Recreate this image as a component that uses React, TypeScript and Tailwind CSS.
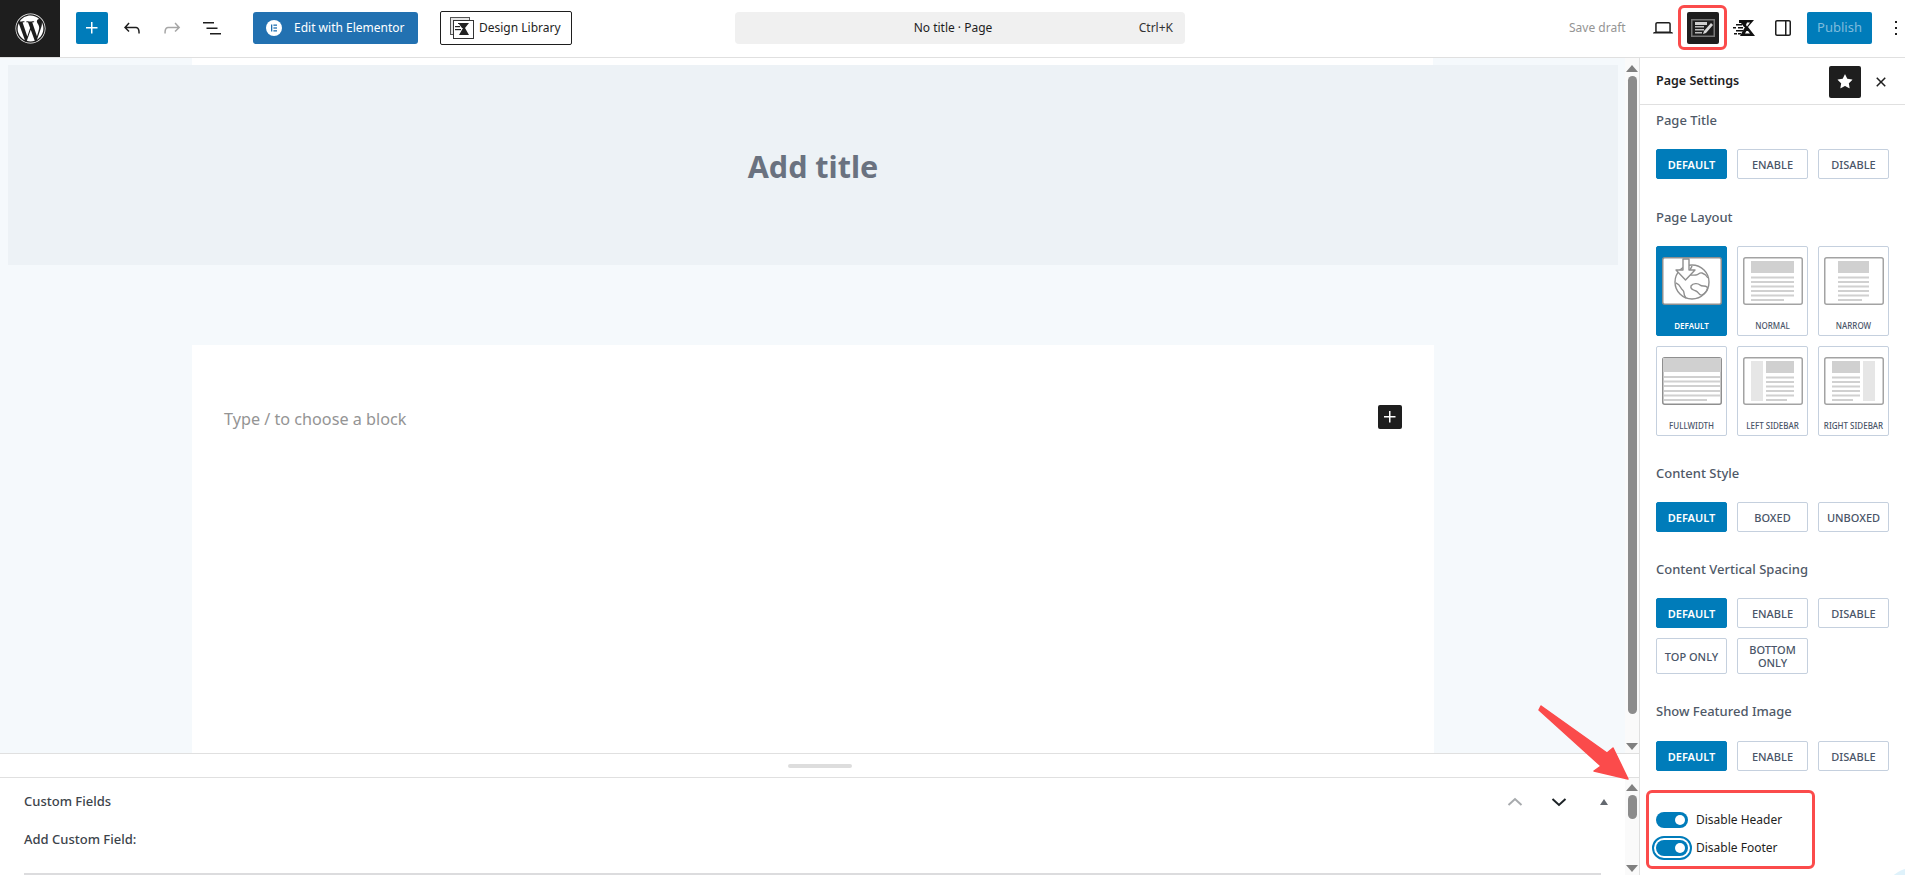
import React from "react";
import { FaWordpress } from "react-icons/fa";

const font = { fontFamily: '"Noto Sans", "Open Sans", sans-serif' };

function WpIcon({ d, className = "" }: { d: string; className?: string }) {
  return (
    <svg viewBox="0 0 24 24" width="24" height="24" fill="currentColor" className={"shrink-0 " + className}>
      <path d={d} />
    </svg>
  );
}

function OptBtn({ label, active, tall }: { label: string; active?: boolean; tall?: boolean }) {
  return (
    <div
      className={
        "flex items-center justify-center text-center rounded-[2px] border text-[11px] leading-[13px] font-medium " +
        (tall ? "h-[36px] " : "h-[30px] ") +
        (active ? "bg-[#007cba] border-[#007cba] text-white font-semibold" : "bg-white border-[#c5d0de] text-[#4a5568]")
      }
    >
      {label}
    </div>
  );
}

function Heading({ children, tight }: { children: React.ReactNode; tight?: boolean }) {
  return (
    <div className={"h-[20px] leading-[20px] text-[13px] font-medium text-[#4f5967] " + (tight ? "mb-[20px]" : "mb-[19px]")}>
      {children}
    </div>
  );
}

function Frame({ children, dark }: { children?: React.ReactNode; dark?: boolean }) {
  return (
    <svg width="60" height="48" viewBox="0 0 60 48" className="block shrink-0">
      <rect x="0.75" y="0.75" width="58.5" height="46.5" rx="2" fill="#fff" stroke={dark ? "#8f8f8f" : "#a3a3a3"} strokeWidth="1.5" />
      {children}
    </svg>
  );
}

function Lines({ x, w, last, ys }: { x: number; w: number; last: number; ys: number[] }) {
  return (
    <>
      {ys.map((y, i) => (
        <rect key={y} x={x} y={y} width={i === ys.length - 1 ? last : w} height="2" fill="#d0d0d0" />
      ))}
    </>
  );
}

const lineYs = [19.5, 24, 28.5, 33, 37.5, 42];

const layoutCards: { label: string; art: React.ReactNode; active?: boolean }[] = [
  {
    label: "DEFAULT",
    active: true,
    art: (
      <Frame dark>
        <g fill="none" stroke="#8f8f8f" strokeWidth="1.4" strokeLinejoin="round">
          <circle cx="30" cy="25" r="17" />
          <path d="M14 26c3 1 4 3 5 5s3 2 3 5 1 4 2 5" />
          <path d="M30 9c-1 3-3 4-3 7s4 2 7 2 3-3 6-2 5 3 6 5" />
          <path d="M29 29c2-3 7-3 9-1s5 0 7 2-2 7-5 8-3-3-6-4-6-2-5-5z" />
          <path d="M21 2h6v11h6l-9.5 10L14 13h7z" fill="#fff" />
        </g>
      </Frame>
    ),
  },
  {
    label: "NORMAL",
    art: (
      <Frame>
        <rect x="8" y="4" width="43" height="12" fill="#d0d0d0" />
        <Lines x={8} w={43} last={33} ys={lineYs} />
      </Frame>
    ),
  },
  {
    label: "NARROW",
    art: (
      <Frame>
        <rect x="14" y="4" width="31" height="12" fill="#d0d0d0" />
        <Lines x={14} w={31} last={24} ys={lineYs} />
      </Frame>
    ),
  },
  {
    label: "FULLWIDTH",
    art: (
      <Frame dark>
        <rect x="1" y="1" width="58" height="14" fill="#d0d0d0" />
        <Lines x={2} w={56} last={43} ys={[19, 23.5, 28, 33, 37.5, 42]} />
      </Frame>
    ),
  },
  {
    label: "LEFT SIDEBAR",
    art: (
      <Frame>
        <rect x="8" y="4" width="12" height="40" fill="#e6e6e6" />
        <rect x="23" y="4" width="28" height="12" fill="#d0d0d0" />
        <Lines x={23} w={28} last={21} ys={lineYs} />
      </Frame>
    ),
  },
  {
    label: "RIGHT SIDEBAR",
    art: (
      <Frame>
        <rect x="39" y="4" width="12" height="40" fill="#e6e6e6" />
        <rect x="8" y="4" width="28" height="12" fill="#d0d0d0" />
        <Lines x={8} w={28} last={21} ys={lineYs} />
      </Frame>
    ),
  },
];

function LayoutCard({ label, art, active }: { label: string; art: React.ReactNode; active?: boolean }) {
  return (
    <div
      className={
        "h-[90px] rounded-[2px] border flex flex-col items-center pt-[10px] " +
        (active ? "bg-[#007cba] border-[#007cba]" : "bg-white border-[#c5d0de]")
      }
    >
      {art}
      <div
        className={
          "mt-[15px] text-[8px] leading-[12px] font-medium whitespace-nowrap " +
          (active ? "text-white font-semibold" : "text-[#4a5568]")
        }
      >
        {label}
      </div>
    </div>
  );
}

function Toggle({ focus, label }: { focus?: boolean; label: string }) {
  return (
    <div className="flex items-center h-[16px]">
      <div
        className={
          "relative w-[32px] h-[16px] rounded-full bg-[#007cba] " +
          (focus ? "outline-2 outline-offset-2 outline-[#007cba]" : "")
        }
      >
        <div className="absolute right-[3px] top-[3px] w-[10px] h-[10px] rounded-full bg-white" />
      </div>
      <span className="ml-[8px] text-[12px] text-[#1e1e1e]">{label}</span>
    </div>
  );
}

function Scrollbar({ arrowMargin, thumbH }: { arrowMargin: string; thumbH: string }) {
  return (
    <div className="w-[14px] bg-[#fafafa] shrink-0 flex flex-col items-center relative">
      <svg width="12" height="7" viewBox="0 0 12 7" className={arrowMargin}>
        <path d="M6 0l6 7H0z" fill="#808080" />
      </svg>
      <div className={"w-[9px] rounded-full bg-[#8c8c8c] mt-[4px] " + thumbH} />
      <svg width="12" height="7" viewBox="0 0 12 7" className="mt-auto mb-[3px]">
        <path d="M0 0h12L6 7z" fill="#808080" />
      </svg>
    </div>
  );
}

function KadenceMark({ className = "" }: { className?: string }) {
  return (
    <svg viewBox="0 0 22 18" width="22" height="18" className={"shrink-0 " + className} fill="#111">
      <path d="M6 1h15l-6 7 7 9H7l5-9-1-.01L8 4H6z" />
      <path d="M14 3.5h3l-3 4-1-1.5zM15 12l2 2.6h-5l1.4-2.6z" fill="#fff" />
      <rect x="3" y="5" width="6" height="1.5" />
      <rect x="0" y="8" width="3" height="1.5" />
      <rect x="5" y="8" width="5" height="1.5" />
      <rect x="3" y="11" width="7" height="1.5" />
      <rect x="1" y="14" width="3" height="1.5" />
      <rect x="5" y="14" width="3" height="1.5" />
    </svg>
  );
}

export default function App() {
  return (
    <div style={font} className="relative w-[1905px] h-[875px] overflow-hidden bg-white flex flex-col text-[#1e1e1e]">
      {/* Top bar */}
      <div className="h-[58px] shrink-0 border-b border-[#e0e0e0] flex items-center pb-[1px]">
        <div className="w-[60px] h-[57px] bg-[#1e1e1e] flex items-center justify-center text-white shrink-0">
          <FaWordpress size={31} />
        </div>
        <div className="ml-[16px] w-[32px] h-[32px] rounded-[2px] bg-[#007cba] text-white flex items-center justify-center shrink-0">
          <WpIcon d="M11 12.5V17.5H12.5V12.5H17.5V11H12.5V6H11V11H6V12.5H11Z" />
        </div>
        <WpIcon className="ml-[12px]" d="M18.3 11.7c-.6-.6-1.4-.9-2.3-.9H6.7l2.9-3.3-1.1-1-4.5 5L8.5 16l1-1-2.7-2.7H16c.5 0 .9.2 1.3.5 1 1 1 3.4 1 4.5v.3h1.5v-.2c0-1.5 0-4.3-1.5-5.7z" />
        <WpIcon className="ml-[16px] text-[#a6a6a6]" d="M15.6 6.5l-1.1 1 2.9 3.3H8c-.9 0-1.7.3-2.3.9-1.4 1.5-1.4 4.2-1.4 5.6v.2h1.5v-.3c0-1.1 0-3.5 1-4.5.3-.3.7-.5 1.3-.5h9.2L14.5 15l1.1 1.1 4.6-4.6-4.6-5z" />
        <WpIcon className="ml-[16px]" d="M3 6h11v1.5H3V6Zm3.5 5.5h11V13h-11v-1.5ZM21 17H10v1.5h11V17Z" />
        <div className="ml-[29px] w-[165px] h-[32px] rounded-[3px] bg-[#2271b1] text-white flex items-center pl-[13px] shrink-0">
          <svg width="16" height="16" viewBox="0 0 16 16">
            <circle cx="8" cy="8" r="8" fill="#fff" />
            <rect x="5" y="4.5" width="1.3" height="7" fill="#2271b1" />
            <rect x="7.4" y="4.5" width="3.6" height="1.3" fill="#2271b1" />
            <rect x="7.4" y="7.35" width="3.6" height="1.3" fill="#2271b1" />
            <rect x="7.4" y="10.2" width="3.6" height="1.3" fill="#2271b1" />
          </svg>
          <span className="ml-[12px] text-[12px] whitespace-nowrap">Edit with Elementor</span>
        </div>
        <div className="ml-[22px] w-[132px] h-[34px] rounded-[2px] border border-[#1e1e1e] flex items-center pl-[9px] shrink-0">
          <svg width="24" height="22" viewBox="0 0 24 22" className="shrink-0">
            <rect x="0.5" y="0.5" width="19" height="17" fill="#e5e5e5" stroke="#555" />
            <rect x="3.5" y="3.5" width="20" height="18" fill="#fff" stroke="#333" />
            <path d="M8 6h11l-4 5 4 7H9l4-7-1 0-3-4H8z" fill="#222" />
            <rect x="5" y="9" width="5" height="1.2" fill="#222" />
            <rect x="5" y="12" width="6" height="1.2" fill="#222" />
          </svg>
          <span className="ml-[5px] text-[12px] whitespace-nowrap">Design Library</span>
        </div>
        <div className="ml-[163px] w-[450px] h-[32px] rounded-[4px] bg-[#f0f0f0] flex items-center relative text-[12px] shrink-0">
          <span className="w-full text-center pr-[14px] whitespace-nowrap">No title · Page</span>
          <span className="absolute right-[12px] text-[#333]">Ctrl+K</span>
        </div>
        <span className="ml-[384px] w-[58px] text-[12px] text-[#949494] whitespace-nowrap shrink-0">Save draft</span>
        <WpIcon className="ml-[24px]" d="M20.5 16h-.7V8c0-1.1-.9-2-2-2H6.2c-1.1 0-2 .9-2 2v8h-.7c-.8 0-1.5.7-1.5 1.5h20c0-.8-.7-1.5-1.5-1.5zM5.7 8c0-.3.2-.5.5-.5h11.6c.3 0 .5.2.5.5v7.6H5.7V8z" />
        <div className="ml-[12px] w-[32px] h-[32px] rounded-[2px] bg-[#1e1e1e] flex items-center justify-center shrink-0">
          <svg width="24" height="20" viewBox="0 0 24 20">
            <rect x="0.75" y="1.75" width="22.5" height="16.5" fill="none" stroke="#777" strokeWidth="1.5" />
            <rect x="4" y="4" width="12" height="3" fill="#cfcfcf" />
            <rect x="4" y="8" width="9" height="1.5" fill="#bdbdbd" />
            <rect x="4" y="11" width="9" height="1.5" fill="#bdbdbd" />
            <rect x="4" y="14" width="7" height="1.5" fill="#bdbdbd" />
            <path d="M20 5l2 2-7 8-3 1 1-3z" fill="#d8d8d8" />
          </svg>
        </div>
        <KadenceMark className="ml-[14px]" />
        <WpIcon className="ml-[16px]" d="M18 4H6c-1.1 0-2 .9-2 2v12c0 1.1.9 2 2 2h12c1.1 0 2-.9 2-2V6c0-1.1-.9-2-2-2zm-4 14.5H6c-.3 0-.5-.2-.5-.5V6c0-.3.2-.5.5-.5h8v13zm4.5-.5c0 .3-.2.5-.5.5h-2.5v-13H18c.3 0 .5.2.5.5v12z" />
        <div className="ml-[12px] w-[65px] h-[32px] rounded-[2px] bg-[#007cba] text-[#7ebbdc] text-[13px] flex items-center justify-center shrink-0">
          Publish
        </div>
        <WpIcon className="ml-[12px]" d="M13 19h-2v-2h2v2zm0-6h-2v-2h2v2zm0-6h-2V5h2v2z" />
      </div>

      {/* Body */}
      <div className="flex-1 flex min-h-0">
        <div className="flex-1 min-w-0 flex flex-col">
          {/* Canvas */}
          <div className="h-[695px] shrink-0 flex">
            <div className="flex-1 min-w-0 bg-[#f5f9fc] flex flex-col">
              <div className="h-[7px] mx-[192px] bg-white" />
              <div className="h-[200px] ml-[8px] mr-[7px] pt-[3px] bg-[#edf2f6] flex items-center justify-center shrink-0">
                <span className="text-[30.5px] font-bold text-[#6a7280]">Add title</span>
              </div>
              <div className="h-[80px] shrink-0" />
              <div className="flex-1 ml-[192px] mr-[191px] bg-white flex items-start justify-between pl-[32px] pr-[32px] pt-[60px]">
                <span className="text-[16.2px] leading-[28px] text-[#949494]">Type / to choose a block</span>
                <div className="w-[24px] h-[24px] rounded-[2px] bg-[#1e1e1e] text-white flex items-center justify-center">
                  <WpIcon d="M11 12.5V17.5H12.5V12.5H17.5V11H12.5V6H11V11H6V12.5H11Z" />
                </div>
              </div>
            </div>
            <Scrollbar arrowMargin="mt-[7px]" thumbH="h-[638px]" />
          </div>
          {/* Resize handle */}
          <div className="h-[25px] shrink-0 border-t border-b border-[#e0e0e0] flex items-center justify-center">
            <div className="w-[64px] h-[4px] rounded-full bg-[#ddd]" />
          </div>
          {/* Meta box */}
          <div className="flex-1 min-h-0 flex">
            <div className="flex-1 min-w-0 pl-[24px] relative">
              <div className="h-[47px] flex items-center text-[13px] font-medium text-[#3c434a] pr-[16px]">
                <span className="flex-1">Custom Fields</span>
                <svg width="16" height="10" viewBox="0 0 16 10" className="mr-[28px]" fill="none" stroke="#a7aaad" strokeWidth="2">
                  <path d="M1.5 8L8 2l6.5 6" />
                </svg>
                <svg width="16" height="10" viewBox="0 0 16 10" className="mr-[32px]" fill="none" stroke="#1d2327" strokeWidth="2">
                  <path d="M1.5 2L8 8l6.5-6" />
                </svg>
                <svg width="10" height="6" viewBox="0 0 10 6">
                  <path d="M5 0l4 6H1z" fill="#646970" />
                </svg>
              </div>
              <div className="h-[30px] flex items-center text-[13px] font-medium text-[#3c434a]">Add Custom Field:</div>
              <div className="mt-[18px] w-[1577px] border-t-2 border-[#dcdcde]" />
            </div>
            <Scrollbar arrowMargin="mt-[6px]" thumbH="h-[24px]" />
          </div>
        </div>

        {/* Sidebar */}
        <div className="w-[266px] shrink-0 border-l border-[#e0e0e0] flex flex-col bg-white">
          <div className="h-[47px] shrink-0 border-b border-[#e0e0e0] flex items-center pl-[16px] pt-[1px]">
            <span className="flex-1 text-[12.5px] font-semibold">Page Settings</span>
            <div className="w-[32px] h-[32px] rounded-[2px] bg-[#1e1e1e] text-white flex items-center justify-center">
              <WpIcon d="M11.776 4.454a.25.25 0 01.448 0l2.069 4.192a.25.25 0 00.188.137l4.626.672a.25.25 0 01.139.426l-3.348 3.263a.25.25 0 00-.072.222l.79 4.607a.25.25 0 01-.362.263l-4.138-2.175a.25.25 0 00-.232 0l-4.138 2.175a.25.25 0 01-.363-.263l.79-4.607a.25.25 0 00-.071-.222L4.754 9.881a.25.25 0 01.139-.426l4.626-.672a.25.25 0 00.188-.137l2.069-4.192z" />
            </div>
            <WpIcon className="ml-[8px] mr-[12px]" d="M12 13.06l3.712 3.713 1.061-1.06L13.061 12l3.712-3.712-1.06-1.06L12 10.938 8.288 7.227l-1.061 1.06L10.939 12l-3.712 3.712 1.06 1.061L12 13.061z" />
          </div>
          <div className="pl-[16px] pt-[5px] w-[249px]">
            <Heading>Page Title</Heading>
            <div className="grid grid-cols-3 gap-[10px] mb-[28px]">
              <OptBtn label="DEFAULT" active />
              <OptBtn label="ENABLE" />
              <OptBtn label="DISABLE" />
            </div>
            <Heading>Page Layout</Heading>
            <div className="grid grid-cols-3 gap-[10px] mb-[27px]">
              {layoutCards.map((c) => (
                <LayoutCard key={c.label} {...c} />
              ))}
            </div>
            <Heading>Content Style</Heading>
            <div className="grid grid-cols-3 gap-[10px] mb-[27px]">
              <OptBtn label="DEFAULT" active />
              <OptBtn label="BOXED" />
              <OptBtn label="UNBOXED" />
            </div>
            <Heading>Content Vertical Spacing</Heading>
            <div className="grid grid-cols-3 gap-[10px] mb-[27px]">
              <OptBtn label="DEFAULT" active />
              <OptBtn label="ENABLE" />
              <OptBtn label="DISABLE" />
              <OptBtn label="TOP ONLY" tall />
              <OptBtn label="BOTTOM ONLY" tall />
            </div>
            <Heading tight>Show Featured Image</Heading>
            <div className="grid grid-cols-3 gap-[10px] mb-[41px]">
              <OptBtn label="DEFAULT" active />
              <OptBtn label="ENABLE" />
              <OptBtn label="DISABLE" />
            </div>
            <div className="flex flex-col gap-[12px]">
              <Toggle label="Disable Header" />
              <Toggle focus label="Disable Footer" />
            </div>
          </div>
        </div>
      </div>

      {/* Annotations laid over the page */}
      <div className="absolute left-[1678px] top-[5px] w-[49px] h-[45px] rounded-[6px] border-[3px] border-[#fb4b4b]" />
      <div className="absolute left-[1646px] top-[790px] w-[169px] h-[79px] rounded-[6px] border-[3px] border-[#fb4b4b]" />
      <svg className="absolute left-[1530px] top-[700px]" width="110" height="90" viewBox="0 0 110 90">
        <path d="M11 6L77 53l6-5L98 79 64 71l7-5L9 10z" fill="#fb4b4b" stroke="#fb4b4b" strokeWidth="1.5" strokeLinejoin="round" />
      </svg>
      <div className="absolute left-[1883px] top-[868px] w-[60px] h-[60px] rounded-full bg-[#dff2fb]" />
    </div>
  );
}
